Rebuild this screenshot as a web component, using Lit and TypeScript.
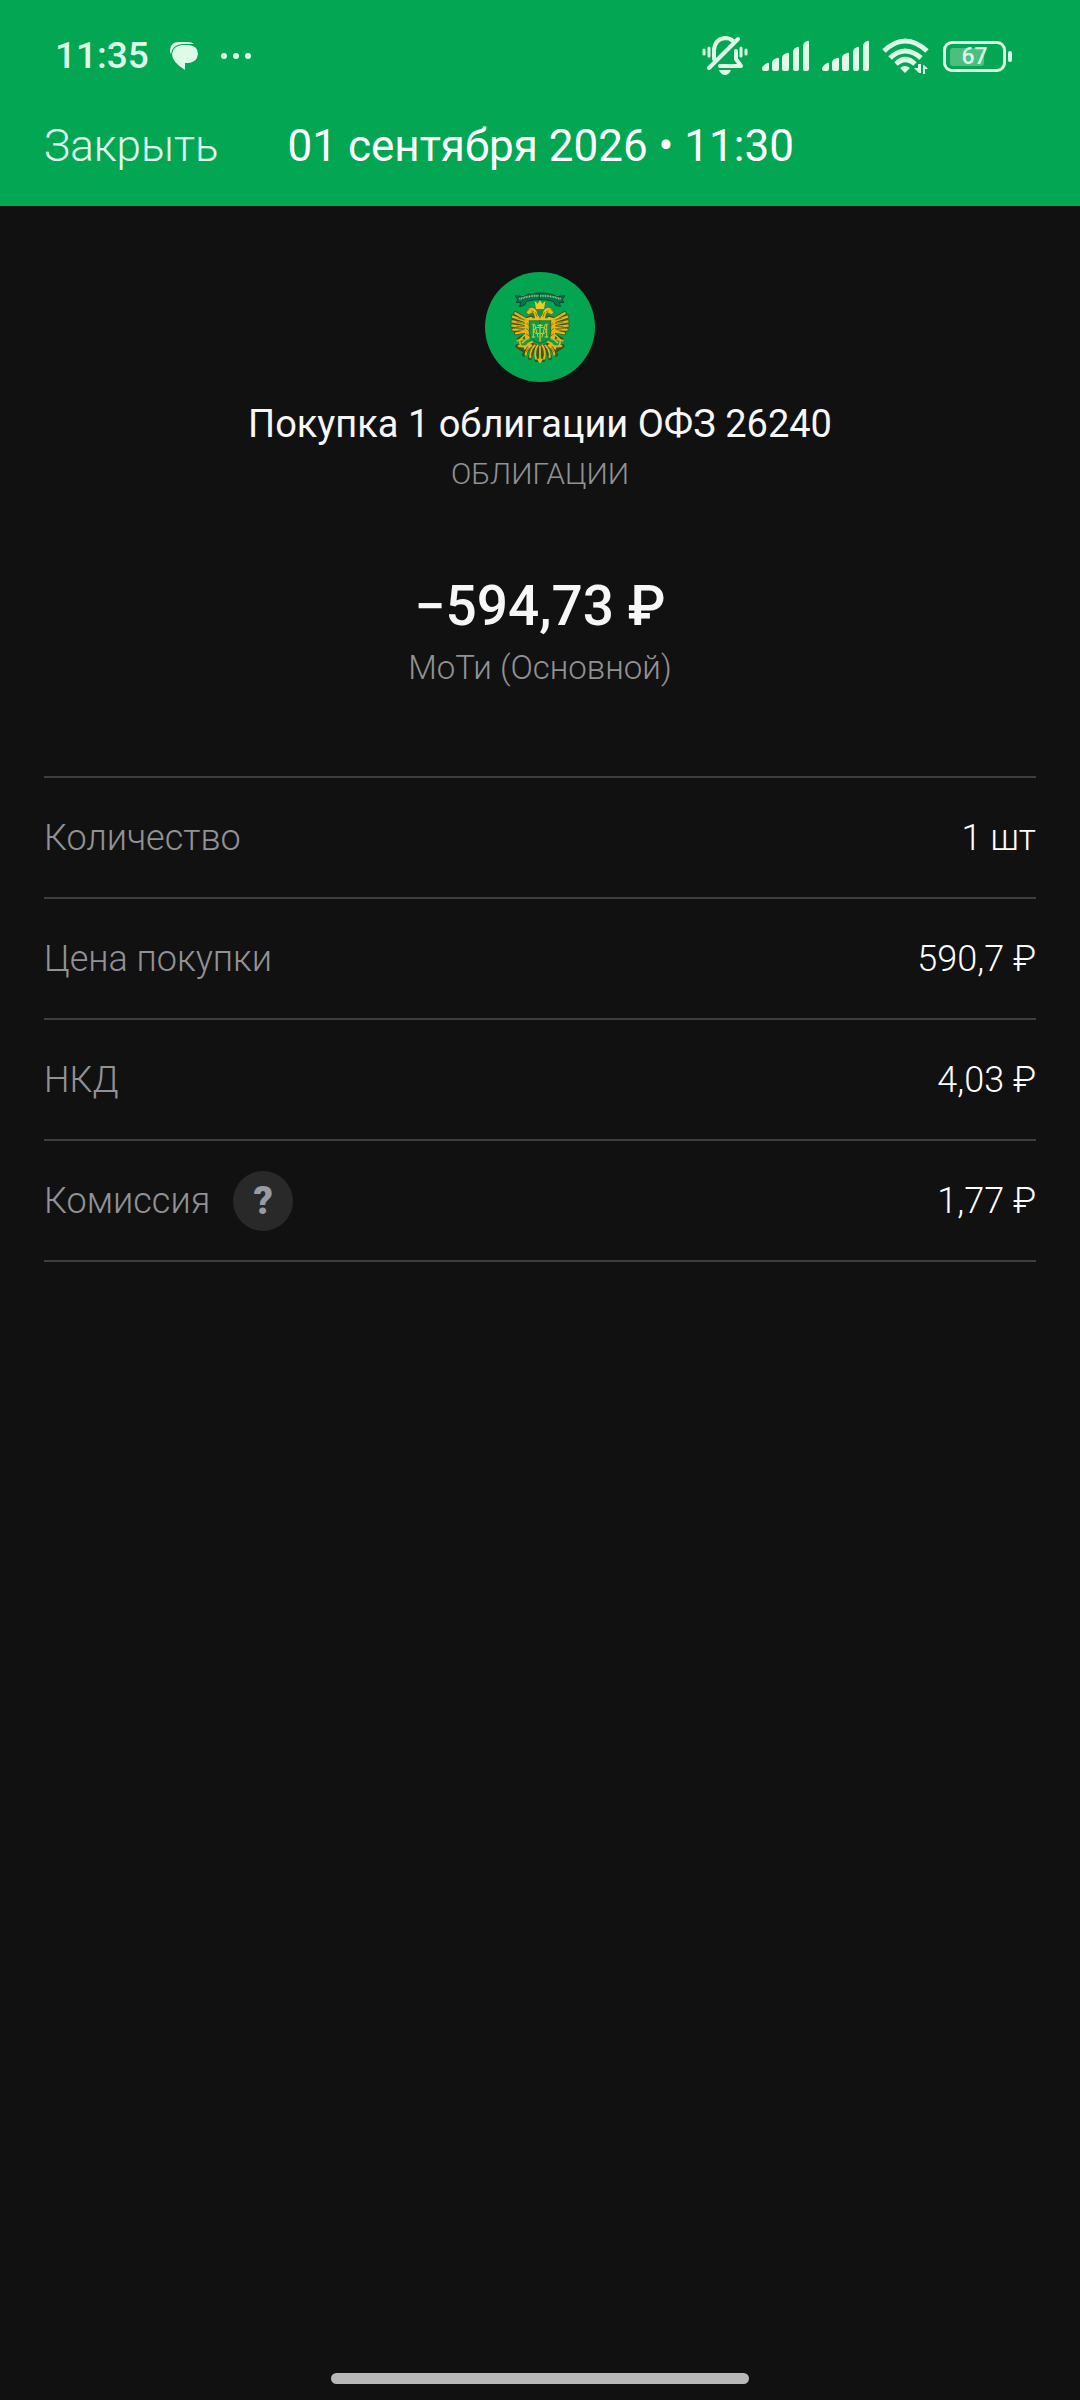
import { LitElement, html, svg, css, nothing } from "lit";
import { customElement, property, state } from "lit/decorators.js";

interface Detail {
    label: string;
    value: string;
    hint?: boolean;
}

@customElement("status-bar")
export class StatusBar extends LitElement {
    @property() time = "";
    @property({ type: Number }) battery = 0;

    static styles = css`
        :host {
            display: flex;
            align-items: center;
            justify-content: space-between;
            height: 112px;
            padding: 0 68px 0 55px;
            box-sizing: border-box;
            color: #defbe8;
        }
        .side {
            display: flex;
            align-items: center;
        }
        .left {
            gap: 21px;
        }
        .right {
            gap: 12px;
        }
        .time {
            font-size: 37px;
            font-weight: 500;
            line-height: 44px;
        }
        svg {
            display: block;
            fill: currentColor;
        }
        .battery {
            display: flex;
            align-items: center;
            gap: 2px;
            margin-left: 2px;
        }
        .cell {
            position: relative;
            box-sizing: border-box;
            width: 63px;
            height: 31px;
            border: 3px solid currentColor;
            border-radius: 9px;
            font-size: 23px;
            font-weight: 500;
            line-height: 25px;
            text-align: center;
        }
        .level {
            position: absolute;
            top: 4px;
            bottom: 3px;
            left: 4px;
            border-radius: 3px;
            background: #4cbe7e;
        }
        .percent {
            position: relative;
        }
        .nub {
            width: 4px;
            height: 11px;
            border-radius: 2px;
            background: currentColor;
        }
    `;

    _signal() {
        return html`
            <svg width="48" height="32" viewBox="0 0 48 32" aria-hidden="true">
                <path d="M0 28Q1 25 5 23Q7 22 7 24V29Q7 31 5 31H2Q0 31 0 29Z" />
                <path d="M10 22Q11 19 15 18Q17 17 17 19V29Q17 31 15 31H12Q10 31 10 29Z" />
                <path d="M20 17Q21 14 25 13Q27 12 27 14V29Q27 31 25 31H22Q20 31 20 29Z" />
                <path d="M31 11Q32 8 35 7Q37 6 37 8V29Q37 31 35 31H33Q31 31 31 29Z" />
                <path d="M41 5Q42 2 45 1Q47 0 47 2V29Q47 31 45 31H43Q41 31 41 29Z" />
            </svg>
        `;
    }

    render() {
        return html`
            <div class="side left">
                <span class="time">${this.time}</span>
                <svg width="29" height="30" viewBox="0 0 29 30" aria-hidden="true">
                    <path d="M0 10Q0 1 9 1H18Q22 1 24 3H12Q2 4 1 13Q0 12 0 10Z" />
                    <path d="M12 4H19Q28 5 28 13Q27 21 19 22H15V29Q2 21 2 13Q3 5 12 4Z" />
                </svg>
                <svg width="32" height="8" viewBox="0 0 32 8" aria-hidden="true">
                    <circle cx="4" cy="4" r="3" />
                    <circle cx="16" cy="4" r="3" />
                    <circle cx="28" cy="4" r="3" />
                </svg>
            </div>
            <div class="side right">
                <svg width="48" height="40" viewBox="0 0 48 40" aria-hidden="true">
                    <g fill="none" stroke="currentColor" stroke-width="3" stroke-linecap="round">
                        <path d="M2 14V18M7 12V20M39 12V20M44 14V18" />
                        <path d="M12 23V14Q13 3 23 2Q28 2 31 5" stroke-width="4" />
                        <path d="M34 15V23L39 30H18" stroke-width="4" stroke-linejoin="round" />
                        <path d="M36 3L7 32" stroke-width="4" />
                    </g>
                    <path d="M17 34H29Q27 39 23 39Q19 39 17 34Z" />
                </svg>
                ${this._signal()}
                ${this._signal()}
                <svg width="47" height="36" viewBox="0 0 47 36" aria-hidden="true">
                    <g fill="none" stroke="currentColor" stroke-width="5">
                        <path d="M2 13Q23 -7 45 13" />
                        <path d="M8 20Q23 6 39 20" />
                        <path d="M14 26Q23 17 33 26" />
                    </g>
                    <path d="M18 30Q23 26 28 30L23 35Z" />
                    <path d="M36 26H39V35H37L32 30H36ZM41 27H42L46 31H43V36H41Z" />
                </svg>
                <div class="battery">
                    <div class="cell">
                        <span class="level" style="width: ${this.battery * 0.9}%"></span>
                        <span class="percent">${this.battery}</span>
                    </div>
                    <span class="nub"></span>
                </div>
            </div>
        `;
    }
}

@customElement("bond-emblem")
export class BondEmblem extends LitElement {
    static styles = css`
        :host {
            display: block;
            width: 110px;
            height: 110px;
        }
        svg {
            display: block;
            width: 100%;
            height: 100%;
        }
    `;

    // one side of the eagle, the other one is its mirror image
    _half() {
        return svg`
            <g stroke-linecap="round" stroke-linejoin="round">
                <path d="M210 99Q178 98 160 110L135 107L143 118L139 128L152 127L149 140L164 135L170 124Q190 118 210 119Z" fill="#067547" stroke="#0e4a35" stroke-width="3" />
                <path d="M148 117Q178 106 210 108" fill="none" stroke="#a6c986" stroke-width="5" stroke-dasharray="3 2" stroke-linecap="butt" />
                <g fill="none" stroke="#34541c" stroke-width="12">
                    <path d="M184 172L166 178L136 160M166 182L128 170M164 190L127 184M162 198L127 197M160 206L130 209M162 214L138 220M170 226L146 238" />
                    <path d="M182 250L160 270L142 258M180 256L162 284M192 256L180 294M202 258L200 300" />
                </g>
                <g fill="none" stroke="#e6b41a" stroke-width="7">
                    <path d="M184 174L168 178L136 160M168 184L128 170M166 192L127 184M164 201L127 197M162 209L130 209M164 215L138 220" />
                    <path d="M172 186V232" stroke-width="14" />
                    <path d="M166 224L148 240L152 256M172 234L158 248M158 238L142 242" stroke-width="5" />
                    <path d="M186 246Q172 250 164 266M180 254Q164 262 146 258M184 256Q168 268 167 284M194 256Q180 270 181 292M203 256Q192 274 198 296" stroke-width="6" />
                </g>
                <g fill="none" stroke="#5d5510" stroke-width="2">
                    <path d="M164 180L145 174M163 190L140 186M162 199L140 199M162 208L144 211M171 190L178 198M170 206L178 214M169 222L178 228" />
                    <path d="M176 264L168 276M190 266L184 284M202 268L200 288" />
                </g>
                <path d="M194 178Q194 163 188 158L175 164L169 158Q173 141 187 142Q202 146 204 164L210 172V182H188Z" fill="#edbd1c" stroke="#4d5214" stroke-width="2" />
                <path d="M184 152L192 156M197 158L201 170M178 147L173 153" fill="none" stroke="#6b5a0c" stroke-width="2" />
                <path d="M210 180H178V224Q182 242 210 250Z" fill="#069b50" stroke="#41621a" stroke-width="3" />
                <path d="M176 178H210" stroke="#edbd1c" stroke-width="6" />
                <path d="M188 193H194L204 231M190 231V195M186 231H195M209 203Q194 199 192 212Q193 224 209 220" fill="none" stroke="#d8cb32" stroke-width="3" />
                <path d="M210 147H198L194 123L203 131L210 121Z" fill="#f0ca24" />
            </g>
        `;
    }

    render() {
        return html`
            <svg viewBox="45 36 330 330" aria-hidden="true">
                <circle cx="210" cy="201" r="165" fill="#04a550" />
                ${this._half()}
                <g transform="translate(420 0) scale(-1 1)">${this._half()}</g>
                <path d="M203 151H217V160Q215 166 210 168Q205 166 203 160Z" fill="#07984e" />
                <path d="M210 192V245M202 196H218" stroke="#d8cb32" stroke-width="4" />
                <path d="M210 258V306M203 296L210 306L217 296" fill="none" stroke="#e6b41a" stroke-width="5" />
            </svg>
        `;
    }
}

@customElement("app-root")
export class AppRoot extends LitElement {
    @state() details: Detail[] = [
        { label: "Количество", value: "1 шт" },
        { label: "Цена покупки", value: "590,7 ₽" },
        { label: "НКД", value: "4,03 ₽" },
        { label: "Комиссия", value: "1,77 ₽", hint: true },
    ];

    static styles = css`
        :host {
            display: flex;
            flex-direction: column;
            min-height: 100vh;
            background: #111111;
            color: #f7f7f8;
            font-family: Roboto, "Noto Sans", sans-serif;
        }
        button {
            padding: 0;
            border: none;
            background: none;
            color: inherit;
            font: inherit;
            cursor: pointer;
        }
        h1, h2, p, dl, dd {
            margin: 0;
        }
        header {
            background: #03a653;
            color: #ffffff;
        }
        .toolbar {
            display: flex;
            align-items: center;
            gap: 69px;
            height: 94px;
            padding: 0 44px 26px;
            box-sizing: border-box;
            font-size: 44px;
            line-height: 52px;
        }
        .close {
            font-weight: 300;
            color: #e4fff0;
        }
        h1 {
            font-size: 44px;
            font-weight: 400;
        }
        main {
            flex: 1;
            padding: 66px 44px 0;
        }
        .summary {
            display: flex;
            flex-direction: column;
            align-items: center;
            text-align: center;
        }
        h2 {
            margin-top: 18px;
            font-size: 38px;
            font-weight: 400;
            line-height: 48px;
        }
        .muted {
            color: #929296;
            font-weight: 300;
        }
        .kind {
            margin-top: 6px;
            font-size: 30px;
            line-height: 40px;
        }
        .amount {
            margin-top: 78px;
            font-size: 55px;
            font-weight: 500;
            line-height: 68px;
        }
        .account {
            margin-top: 8px;
            font-size: 33px;
            line-height: 40px;
        }
        .details {
            margin-top: 88px;
            border-top: 2px solid #3e3e3e;
            font-size: 36px;
        }
        .row {
            display: flex;
            align-items: center;
            justify-content: space-between;
            height: 119px;
            border-bottom: 2px solid #3e3e3e;
        }
        dt {
            display: flex;
            align-items: center;
            gap: 23px;
        }
        dd {
            font-weight: 300;
            color: #ffffff;
        }
        .hint {
            width: 60px;
            height: 60px;
            border-radius: 50%;
            background: #292929;
            color: #9a9aa2;
            font-weight: 900;
            font-size: 38px;
            line-height: 60px;
        }
        .home {
            align-self: center;
            width: 418px;
            max-width: 60%;
            height: 11px;
            margin: 16px 0;
            border-radius: 6px;
            background: #b8b8b8;
        }
    `;

    _row(item: Detail) {
        return html`
            <div class="row">
                <dt class="muted">
                    <span>${item.label}</span>
                    ${item.hint ? html`<button class="hint" aria-label="Подробнее">?</button>` : nothing}
                </dt>
                <dd>${item.value}</dd>
            </div>
        `;
    }

    render() {
        return html`
            <header>
                <status-bar time="11:35" battery="67"></status-bar>
                <div class="toolbar">
                    <button class="close">Закрыть</button>
                    <h1>01 сентября 2026 • 11:30</h1>
                </div>
            </header>
            <main>
                <section class="summary">
                    <bond-emblem></bond-emblem>
                    <h2>Покупка 1 облигации ОФЗ 26240</h2>
                    <p class="kind muted">ОБЛИГАЦИИ</p>
                    <p class="amount">−594,73 ₽</p>
                    <p class="account muted">МоТи (Основной)</p>
                </section>
                <dl class="details">
                    ${this.details.map((item) => this._row(item))}
                </dl>
            </main>
            <div class="home"></div>
        `;
    }
}
